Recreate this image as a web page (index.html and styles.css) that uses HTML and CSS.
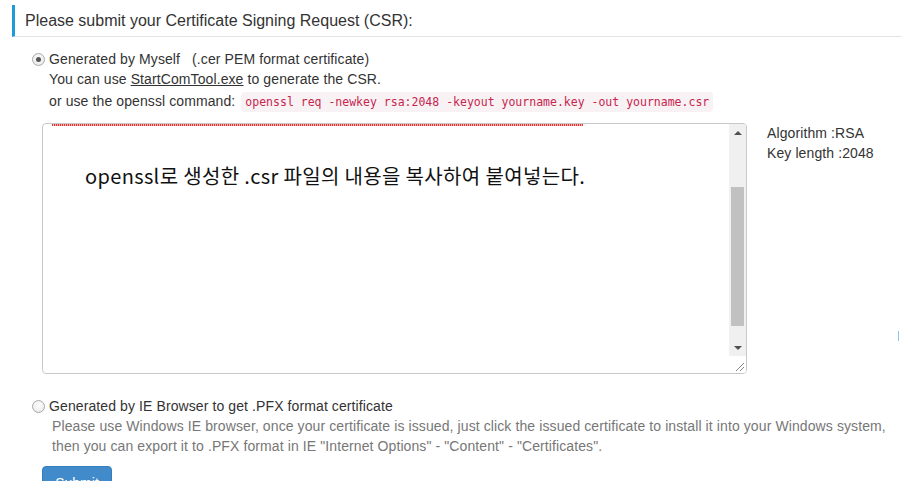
FILE: index.html
```html
<!DOCTYPE html>
<html>
<head>
<meta charset="utf-8">
<link rel="stylesheet" href="styles.css">
</head>
<body>
<div class="page">
  <h3 class="title">Please submit your Certificate Signing Request (CSR):</h3>

  <div class="option">
    <div class="opt-line"><span class="radio checked"></span><span>Generated by Myself&nbsp;&nbsp;&nbsp;(.cer PEM format certificate)</span></div>
    <div class="opt-sub">You can use <a class="link" href="#">StartComTool.exe</a> to generate the CSR.</div>
    <div class="opt-sub">or use the openssl command: <code class="code">openssl req -newkey rsa:2048 -keyout yourname.key -out yourname.csr</code></div>
  </div>

  <div class="csr-row">
    <div class="textarea">
      <div class="ta-content">
        <div class="spell"></div>
        <p class="ta-text">openssl로 생성한 .csr 파일의 내용을 복사하여 붙여넣는다.</p>
      </div>
      <div class="scrollbar">
        <div class="sb-btn"><span class="tri-up"></span></div>
        <div class="sb-track"><div class="sb-thumb"></div></div>
        <div class="sb-btn"><span class="tri-down"></span></div>
        <div class="sb-corner">
          <svg width="9" height="9" viewBox="0 0 9 9"><path d="M9 1 L1 9 M9 5 L5 9" stroke="#888" stroke-width="1" fill="none"/></svg>
        </div>
      </div>
    </div>
    <div class="info">
      <div>Algorithm :RSA</div>
      <div>Key length :2048</div>
    </div>
  </div>

  <div class="option option2">
    <div class="opt-line"><span class="radio"></span><span>Generated by IE Browser to get .PFX format certificate</span></div>
    <div class="help">Please use Windows IE browser, once your certificate is issued, just click the issued certificate to install it into your Windows system,<br>then you can export it to .PFX format in IE "Internet Options" - "Content" - "Certificates".</div>
  </div>

  <div class="actions">
    <button class="btn">Submit</button>
  </div>
</div>
<span class="edge-mark"></span>
</body>
</html>
```
FILE: styles.css
```css
html, body {
  margin: 0;
  padding: 0;
  height: 481px;
  overflow: hidden;
  background: #fff;
}
body {
  font-family: "Liberation Sans", Arial, sans-serif;
  font-size: 14px;
  line-height: 20px;
  letter-spacing: 0.1px;
  color: #333;
  position: relative;
}
.page {
  padding-left: 12px;
  padding-top: 5px;
}
.title {
  margin: 0;
  height: 31px;
  line-height: 31px;
  border-left: 3px solid #1e9ad6;
  border-bottom: 1px solid #e3e3e3;
  padding-left: 10px;
  font-size: 16px;
  letter-spacing: 0;
  font-weight: normal;
  color: #333;
}
.option {
  padding-left: 20px;
  margin-top: 12px;
}
.opt-line {
  display: flex;
  align-items: center;
  height: 20px;
}
.radio {
  width: 11px;
  height: 11px;
  border-radius: 50%;
  border: 1px solid #a9a9a9;
  background: radial-gradient(circle at 50% 40%, #fdfdfd 0%, #e6e6e6 100%);
  margin-right: 4px;
  flex: none;
  display: flex;
  align-items: center;
  justify-content: center;
  box-sizing: content-box;
}
.radio.checked::after {
  content: "";
  width: 5px;
  height: 5px;
  border-radius: 50%;
  background: #555;
}
.opt-sub {
  padding-left: 17px;
  height: 20px;
}
.opt-sub + .opt-sub {
  margin-top: 2px;
}
.link {
  color: #333;
  text-decoration: underline;
}
.code {
  font-family: "DejaVu Sans Mono", "Liberation Mono", monospace;
  font-size: 11.5px;
  letter-spacing: 0;
  color: #c7254e;
  background: #f9f2f4;
  border-radius: 4px;
  padding: 3px 4px;
  margin-left: 2px;
  line-height: 14px;
}
.csr-row {
  display: flex;
  margin-top: 12px;
  margin-left: 30px;
}
.textarea {
  width: 703px;
  height: 249px;
  border: 1px solid #c8c8c8;
  border-radius: 4px;
  display: flex;
  position: relative;
  overflow: hidden;
}
.ta-content {
  flex: 1;
  position: relative;
}
.spell {
  position: absolute;
  top: 0;
  left: 9px;
  width: 531px;
  height: 2px;
  background: repeating-linear-gradient(90deg, #e33 0 1px, #f9b0b0 1px 2px);
}
.ta-text {
  margin: 39px 0 0 42px;
  font-family: "Noto Sans CJK KR", "Noto Sans", sans-serif;
  font-size: 20px;
  letter-spacing: 0.35px;
  line-height: 26px;
  color: #111;
}
.scrollbar {
  width: 17px;
  display: flex;
  flex-direction: column;
  background: #f0f0f0;
}
.sb-btn {
  height: 17px;
  display: flex;
  align-items: center;
  justify-content: center;
}
.tri-up {
  width: 0;
  height: 0;
  border-left: 4px solid transparent;
  border-right: 4px solid transparent;
  border-bottom: 4px solid #505050;
}
.tri-down {
  width: 0;
  height: 0;
  border-left: 4px solid transparent;
  border-right: 4px solid transparent;
  border-top: 4px solid #505050;
}
.sb-track {
  height: 198px;
  padding: 0 2px;
}
.sb-thumb {
  margin-top: 46px;
  height: 139px;
  background: #c1c1c1;
}
.sb-corner {
  height: 17px;
  background: #fff;
  display: flex;
  align-items: flex-end;
  justify-content: flex-end;
  padding: 0 2px 2px 0;
  box-sizing: border-box;
}
.info {
  margin-left: 20px;
  color: #333;
}
.option2 {
  margin-top: 22px;
}
.help {
  padding-left: 20px;
  color: #777;
}
.actions {
  margin-top: 10px;
  padding-left: 30px;
}
.btn {
  font-family: "Liberation Sans", Arial, sans-serif;
  font-size: 14px;
  line-height: 20px;
  padding: 6px 12px;
  color: #fff;
  background: #428bca;
  border: 1px solid #357ebd;
  border-radius: 4px;
  width: 70px;
}
.edge-mark {
  position: absolute;
  left: 898px;
  top: 331px;
  width: 1px;
  height: 10px;
  background: #8cc8f0;
}
```
